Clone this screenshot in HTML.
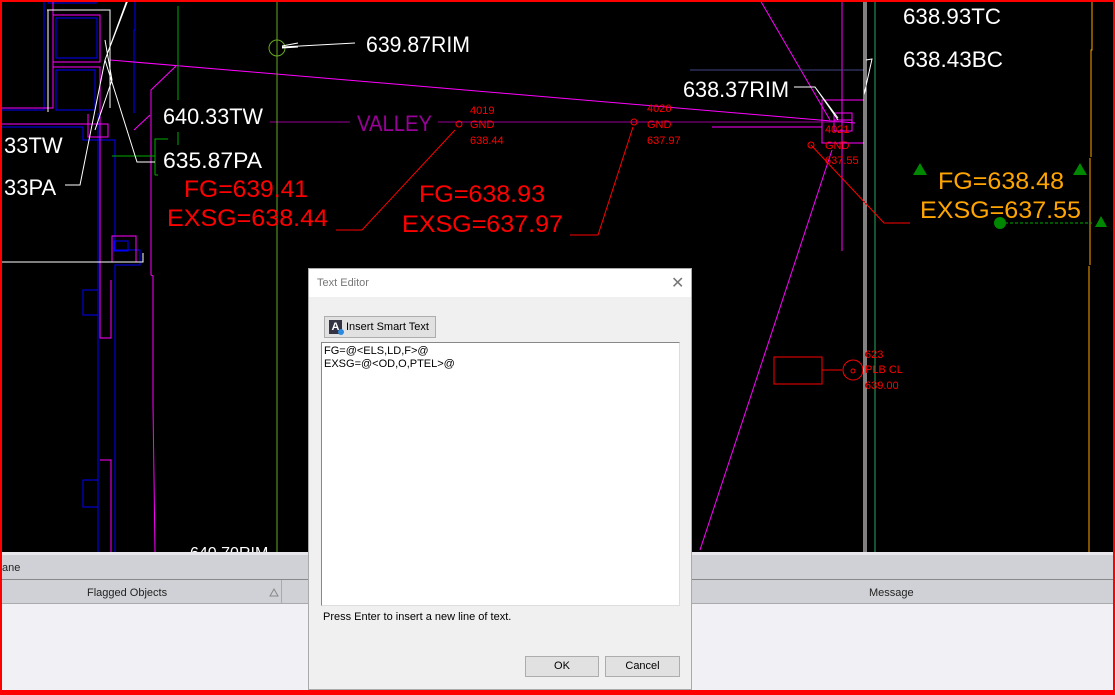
<!DOCTYPE html>
<html><head><meta charset="utf-8"><style>
html,body{margin:0;padding:0;width:1115px;height:695px;overflow:hidden;background:#000;font-family:"Liberation Sans",sans-serif;}
#wrap{position:absolute;left:0;top:0;width:1115px;height:695px;}
svg{position:absolute;left:0;top:0;}
.ui{position:absolute;font-size:11px;color:#000;}
</style></head><body><div id="wrap">
<svg width="1115" height="695" viewBox="0 0 1115 695">
<rect x="0" y="0" width="1115" height="552" fill="#000"/>
<g fill="none" stroke-width="1">
<path d="M2 110 H44 V0 M48 0 V3 H96 V0" stroke="#0000ff"/>
<path d="M56 18 H97 V58 H56 Z M56 70 H95 V110 H56 Z" stroke="#0000ff"/>
<path d="M2 127 H83 V140 H115 V250 H140 V265 H115 V552" stroke="#0000ff"/>
<path d="M98 113 V552 M135 0 V30 H134 V113" stroke="#0000ff"/>
<path d="M83 290 H98 V315 H83 Z M83 480 H98 V507 H83 Z" stroke="#0000ff"/>
<path d="M114 241 H128 V251 H114 Z" stroke="#0000ff"/>
<path d="M2 124 H108 V137 H88 V114 M53 0 V108 H2 M53 15 H100 V62 H53 M53 67 H100 V113" stroke="#ff00ff"/>
<path d="M100 113 V338 H111 V280 M100 460 H111 V552 M111 460 V552" stroke="#ff00ff"/>
<path d="M112 236 H136 V262 H112 Z" stroke="#ff00ff"/>
<path d="M110 60 L855 123" stroke="#ff00ff"/>
<path d="M176 66 L151 90 V275 L153 276 V405 L155 552" stroke="#ff00ff"/>
<path d="M134 130 L150 115" stroke="#ff00ff"/>
<path d="M760 0 L830 120 M822 100 H864 V143 H822 Z M834 113 H852 V131 H834 Z M834 120 H852 M712 127 H822 M842 0 V251 M832 150 L700 550" stroke="#ff00ff"/>
<path d="M270 122 H350 M438 122 H840" stroke="#990099"/>
<path d="M690 70 H864" stroke="#444488"/>
<path d="M178 6 V100 M178 132 V145 M168 139 H155 V175 M155 175 H158 M112 156 H155" stroke="#00aa00"/>
<path d="M277 0 V552" stroke="#66aa22"/>
<circle cx="277" cy="48" r="8" stroke="#66aa22"/>
<path d="M875 0 V552" stroke="#22aa66"/>
<path d="M47 10 H110 V108 M48 10 V112" stroke="#fff"/>
<path d="M127 0 L105 60 L128 0 M105 60 L80 185 H65 M105 60 L137 162 H155 M105 40 L112 80 L95 130" stroke="#fff"/>
<path d="M2 262 H143 V253" stroke="#fff"/>
<path d="M282 47 L355 43 M282 46 L298 43 M282 48 L298 47" stroke="#fff"/>
<path d="M794 87 H815 L838 120 M815 87 L838 118" stroke="#fff"/>
<path d="M866 60 L872 59 L864 95 M864 0 V552 M866 0 V552" stroke="#fff"/>
<path d="M336 230 H362 L455 130" stroke="#f00"/>
<circle cx="459" cy="124" r="3" stroke="#f00"/>
<path d="M570 235 H598 L633 127" stroke="#f00"/>
<circle cx="634" cy="122" r="3" stroke="#f00"/>
<circle cx="811" cy="145" r="3" stroke="#f00"/>
<path d="M811 145 L884 223 H910" stroke="#f00"/>
<path d="M774 357 H822 V384 H774 Z M822 370 H842" stroke="#f00"/>
<circle cx="853" cy="370" r="10" stroke="#f00"/><circle cx="853" cy="371" r="2" stroke="#f00"/>
<path d="M1092 0 V50 H1091 V157 M1090 158 V265 M1089 266 V552" stroke="#ffa500"/>
<path d="M1000 223 H1092" stroke="#00aa00" stroke-dasharray="3 2"/>
</g>
<circle cx="1000" cy="223" r="6" fill="#008800"/>
<path d="M913 175 L920 163 L927 175 Z M1073 175 L1080 163 L1087 175 Z M1095 227 L1101 216 L1107 227 Z" fill="#008800"/>
<g font-family="Liberation Sans, sans-serif" fill="#fff" font-size="22" lengthAdjust="spacingAndGlyphs">
<text x="366" y="52" textLength="104" lengthAdjust="spacingAndGlyphs">639.87RIM</text>
<text x="163" y="124" textLength="100" lengthAdjust="spacingAndGlyphs">640.33TW</text>
<text x="163" y="168" textLength="99" lengthAdjust="spacingAndGlyphs">635.87PA</text>
<text x="4" y="153">33TW</text>
<text x="4" y="195">33PA</text>
<text x="683" y="97" textLength="106" lengthAdjust="spacingAndGlyphs">638.37RIM</text>
<text x="903" y="24" textLength="98" lengthAdjust="spacingAndGlyphs">638.93TC</text>
<text x="903" y="67" textLength="100" lengthAdjust="spacingAndGlyphs">638.43BC</text>
<text x="357" y="131" fill="#990099" textLength="75" lengthAdjust="spacingAndGlyphs">VALLEY</text>
</g>
<g font-family="Liberation Sans, sans-serif" fill="#f00" font-size="24">
<text x="184" y="197" textLength="124" lengthAdjust="spacingAndGlyphs">FG=639.41</text>
<text x="167" y="226" textLength="161" lengthAdjust="spacingAndGlyphs">EXSG=638.44</text>
<text x="419" y="202" textLength="126" lengthAdjust="spacingAndGlyphs">FG=638.93</text>
<text x="402" y="232" textLength="161" lengthAdjust="spacingAndGlyphs">EXSG=637.97</text>
</g>
<g font-family="Liberation Sans, sans-serif" fill="#ffa500" font-size="24">
<text x="938" y="189" textLength="126" lengthAdjust="spacingAndGlyphs">FG=638.48</text>
<text x="920" y="218" textLength="161" lengthAdjust="spacingAndGlyphs">EXSG=637.55</text>
</g>
<g font-family="Liberation Sans, sans-serif" fill="#f00" font-size="11">
<text x="470" y="114">4019</text><text x="470" y="128">GND</text><text x="470" y="144">638.44</text>
<text x="647" y="112">4020</text><text x="647" y="128">GND</text><text x="647" y="144">637.97</text>
<text x="825" y="133">4021</text><text x="825" y="149">GND</text><text x="825" y="164">637.55</text>
<text x="865" y="358">623</text><text x="865" y="373">PLB CL</text><text x="865" y="389">639.00</text>
</g>
<text x="190" y="558" fill="#fff" font-size="16" font-family="Liberation Sans">640.70RIM</text>
<rect x="0" y="552" width="1115" height="143" fill="#f0f0f5"/>
<rect x="0" y="552" width="1115" height="3" fill="#e8e8ec"/>
<rect x="0" y="555" width="1115" height="24" fill="#d0d1d6"/>
<rect x="0" y="579" width="1115" height="1" fill="#888"/>
<rect x="0" y="580" width="1115" height="23" fill="#d0d1d6"/>
<rect x="0" y="603" width="1115" height="1" fill="#aaa"/>
<rect x="281" y="580" width="1" height="23" fill="#aaa"/>
<path d="M270 596 L274 589 L278 596 Z" fill="none" stroke="#888"/>
<text x="2" y="571" font-size="11" fill="#222" font-family="Liberation Sans">ane</text>
<text x="87" y="596" font-size="11" fill="#222" font-family="Liberation Sans">Flagged Objects</text>
<text x="869" y="596" font-size="11" fill="#222" font-family="Liberation Sans">Message</text>
<rect x="1" y="1" width="1113" height="692" fill="none" stroke="#f00" stroke-width="2"/>
<rect x="0" y="690" width="1115" height="5" fill="#f00"/>
</svg>
<div style="position:absolute;left:308px;top:268px;width:384px;height:422px;background:#f0f0f0;border:1px solid #aaa;box-sizing:border-box;">
 <div style="position:absolute;left:0;top:0;width:382px;height:28px;background:#fff;"></div>
 <div class="ui" style="left:8px;top:8px;color:#777;font-size:11px;">Text Editor</div>
 <div class="ui" style="left:362px;top:4px;color:#777;font-size:16px;">✕</div>
 <div style="position:absolute;left:15px;top:47px;width:112px;height:22px;background:#e1e1e1;border:1px solid #adadad;box-sizing:border-box;">
  <div style="position:absolute;left:4px;top:3px;width:13px;height:14px;background:#334;color:#fff;font-size:11px;font-weight:bold;text-align:center;line-height:14px;">A</div>
  <div style="position:absolute;left:13px;top:12px;width:6px;height:6px;border-radius:50%;background:#2a8ae0;"></div>
  <div class="ui" style="left:21px;top:4px;">Insert Smart Text</div>
 </div>
 <div style="position:absolute;left:12px;top:73px;width:359px;height:264px;background:#fff;border:1px solid #888;border-right-color:#ddd;border-bottom-color:#ddd;box-sizing:border-box;">
  <div class="ui" style="left:2px;top:2px;line-height:13px;">FG=@&lt;ELS,LD,F&gt;@<br>EXSG=@&lt;OD,O,PTEL&gt;@</div>
 </div>
 <div class="ui" style="left:14px;top:342px;">Press Enter to insert a new line of text.</div>
 <div style="position:absolute;left:216px;top:387px;width:74px;height:21px;background:#e1e1e1;border:1px solid #adadad;box-sizing:border-box;font-size:11px;text-align:center;line-height:19px;">OK</div>
 <div style="position:absolute;left:296px;top:387px;width:75px;height:21px;background:#e1e1e1;border:1px solid #adadad;box-sizing:border-box;font-size:11px;text-align:center;line-height:19px;">Cancel</div>
</div>
</div></body></html>
